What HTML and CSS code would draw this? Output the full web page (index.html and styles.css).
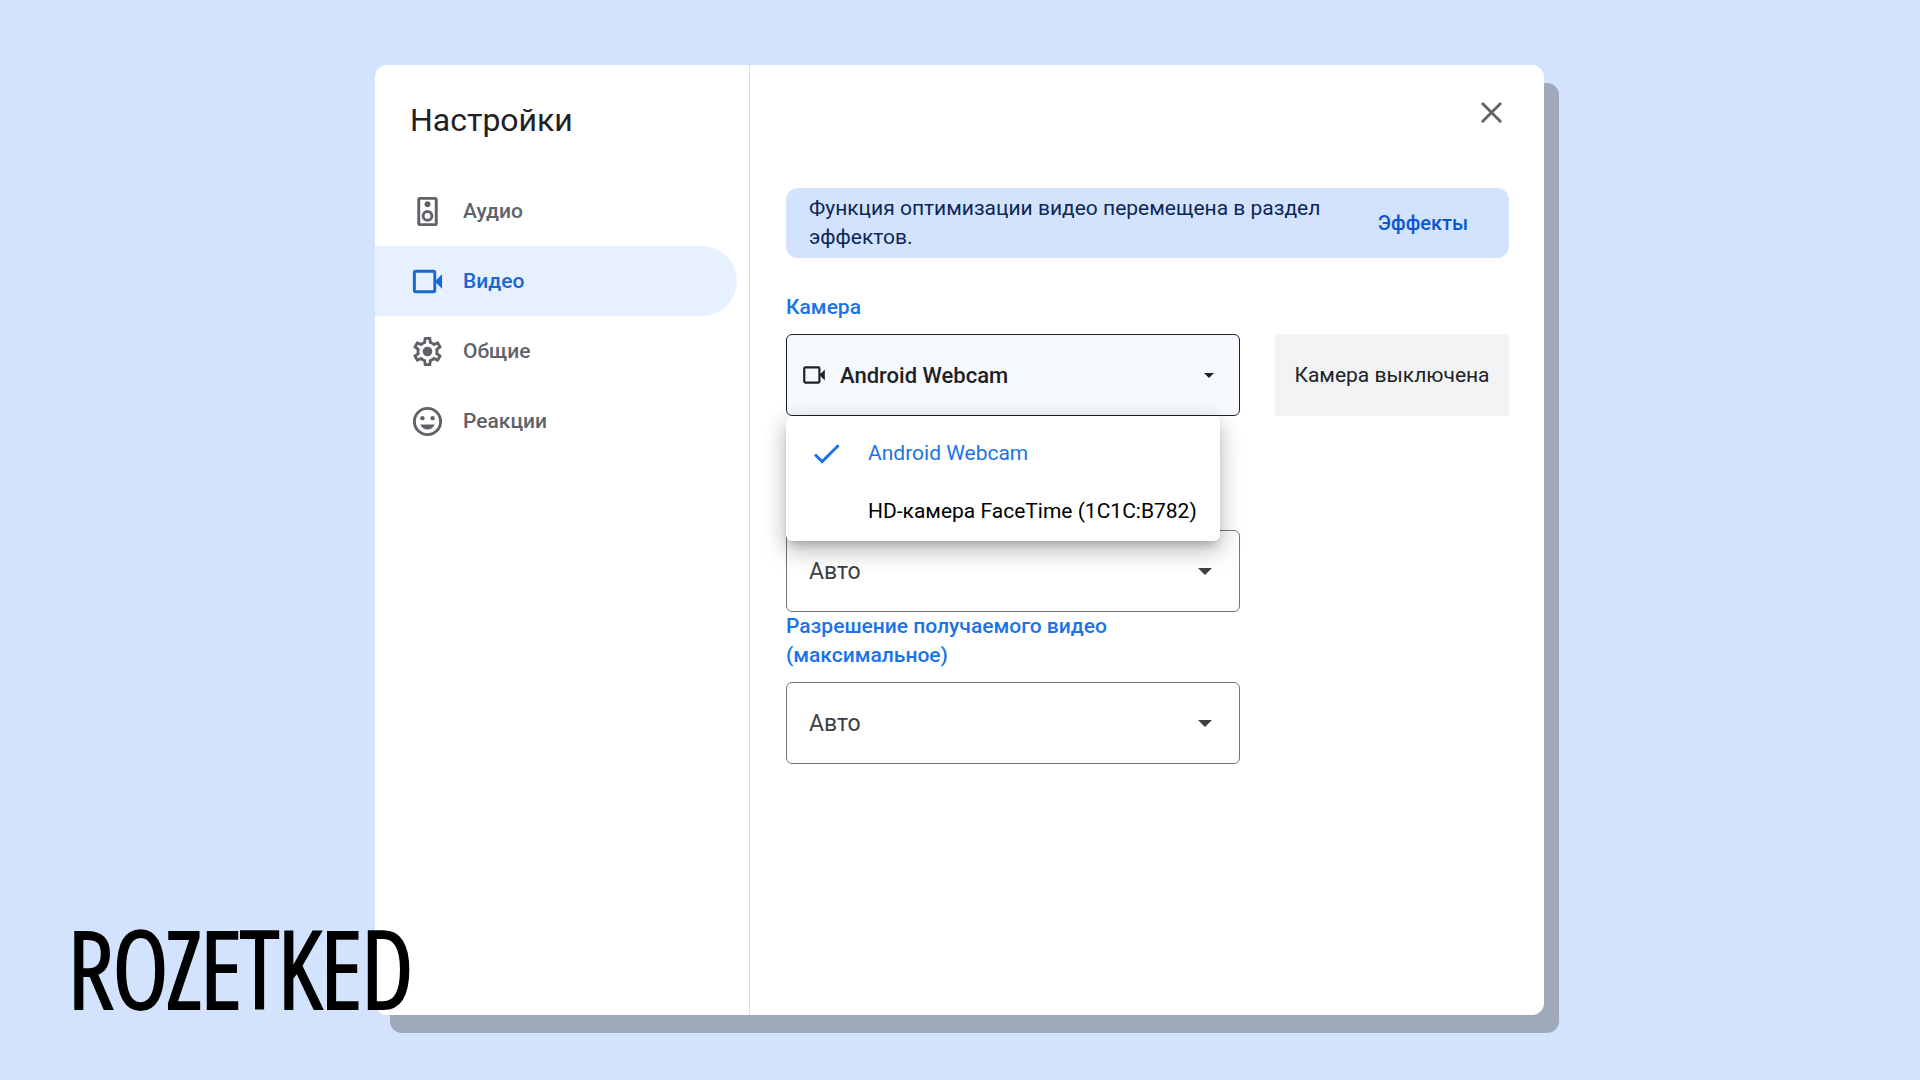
FILE: index.html
```html
<!DOCTYPE html>
<html lang="ru">
<head>
<meta charset="utf-8">
<title>Настройки</title>
<meta name="viewport" content="width=device-width, initial-scale=1">
<link rel="stylesheet" href="styles.css">
</head>
<body>
<main class="dialog" role="dialog" aria-labelledby="title">
  <aside class="sidebar">
    <h1 class="title" id="title">Настройки</h1>
    <nav class="tabs">
      <button class="tab" type="button">
        <svg class="icon" viewBox="0 0 24 24" aria-hidden="true"><rect x="6" y="3" width="12" height="18" rx="1" fill="none" stroke="currentColor" stroke-width="2"/><circle cx="12" cy="7" r="2"/><circle cx="12" cy="15" r="3" fill="none" stroke="currentColor" stroke-width="2"/></svg>
        Аудио
      </button>
      <button class="tab tab-active" type="button" aria-current="page">
        <svg class="icon" viewBox="0 0 24 24" aria-hidden="true"><rect x="3" y="5" width="14" height="14" rx="1" fill="none" stroke="currentColor" stroke-width="2"/><path d="M17 12l5-5v10z"/></svg>
        Видео
      </button>
      <button class="tab" type="button">
        <svg class="icon" viewBox="0 0 24 24" aria-hidden="true"><path d="M19.43 12.98c.04-.32.07-.64.07-.98 0-.34-.03-.66-.07-.98l2.11-1.65c.19-.15.24-.42.12-.64l-2-3.46c-.09-.16-.26-.25-.44-.25-.06 0-.12.01-.17.03l-2.49 1c-.52-.4-1.08-.73-1.69-.98l-.38-2.65C14.46 2.18 14.25 2 14 2h-4c-.25 0-.46.18-.49.42l-.38 2.65c-.61.25-1.17.59-1.69.98l-2.49-1c-.06-.02-.12-.03-.18-.03-.17 0-.34.09-.43.25l-2 3.46c-.13.22-.07.49.12.64l2.11 1.65c-.04.32-.07.65-.07.98 0 .33.03.66.07.98l-2.11 1.65c-.19.15-.24.42-.12.64l2 3.46c.09.16.26.25.44.25.06 0 .12-.01.17-.03l2.49-1c.52.4 1.08.73 1.69.98l.38 2.65c.03.24.24.42.49.42h4c.25 0 .46-.18.49-.42l.38-2.65c.61-.25 1.17-.59 1.69-.98l2.49 1c.06.02.12.03.18.03.17 0 .34-.09.43-.25l2-3.46c.12-.22.07-.49-.12-.64l-2.11-1.65zm-1.98-1.71c.04.31.05.52.05.73 0 .21-.02.43-.05.73l-.14 1.13.89.7 1.08.84-.7 1.21-1.27-.51-1.04-.42-.9.68c-.43.32-.84.56-1.25.73l-1.06.43-.16 1.13-.2 1.35h-1.4l-.19-1.35-.16-1.13-1.06-.43c-.43-.18-.83-.41-1.23-.71l-.91-.7-1.06.43-1.27.51-.7-1.21 1.08-.84.89-.7-.14-1.13c-.03-.31-.05-.54-.05-.74s.02-.43.05-.73l.14-1.13-.89-.7-1.08-.84.7-1.21 1.27.51 1.04.42.9-.68c.43-.32.84-.56 1.25-.73l1.06-.43.16-1.13.2-1.35h1.39l.19 1.35.16 1.13 1.06.43c.43.18.83.41 1.23.71l.91.7 1.06-.43 1.27-.51.7 1.21-1.07.85-.89.7.14 1.13z"/><circle cx="12" cy="12" r="3.3"/></svg>
        Общие
      </button>
      <button class="tab" type="button">
        <svg class="icon" viewBox="0 0 24 24" aria-hidden="true"><circle cx="12" cy="12" r="9" fill="none" stroke="currentColor" stroke-width="2"/><circle cx="8.5" cy="9.7" r="1.5"/><circle cx="15.5" cy="9.7" r="1.5"/><path d="M7 14h10c-.8 2.1-2.8 3.5-5 3.5S7.800 16.100 7 14z"/></svg>
        Реакции
      </button>
    </nav>
  </aside>
  <section class="content">
    <button class="close" type="button" aria-label="Закрыть">
      <svg class="icon" viewBox="0 0 24 24" aria-hidden="true"><path d="M6 6l12 12M18 6L6 18" fill="none" stroke="currentColor" stroke-width="2" stroke-linecap="round"/></svg>
    </button>
    <div class="banner">
      <p class="banner-text">Функция оптимизации видео перемещена в раздел эффектов.</p>
      <button class="banner-action" type="button">Эффекты</button>
    </div>
    <label class="label" for="camera">Камера</label>
    <div class="camera-row">
      <div class="field">
        <svg class="camera-icon" viewBox="0 0 24 24" aria-hidden="true"><rect x="3" y="5" width="14" height="14" rx="1" fill="none" stroke="currentColor" stroke-width="2"/><path d="M17 12l5-5v10z"/></svg>
        <select class="select select-camera" id="camera">
          <option>Android Webcam</option>
          <option>HD-камера FaceTime (1C1C:B782)</option>
        </select>
        <svg class="arrow arrow-small" viewBox="0 0 10 5" aria-hidden="true"><path d="M0 0h10L5 5z"/></svg>
        <div class="menu" role="listbox" aria-label="Камера">
          <button class="option option-selected" type="button" role="option" aria-selected="true">
            <svg class="icon" viewBox="0 0 24 24" aria-hidden="true"><path d="M9 16.170L4.830 12l-1.420 1.410L9 19 21 7l-1.410-1.410z"/></svg>
            Android Webcam
          </button>
          <button class="option" type="button" role="option" aria-selected="false">
            <span class="icon"></span>
            HD-камера FaceTime (1C1C:B782)
          </button>
        </div>
      </div>
      <div class="preview">Камера выключена</div>
    </div>
    <div class="resolutions">
      <div class="field">
        <select class="select" id="send" aria-label="Разрешение отправляемого видео"><option>Авто</option></select>
        <svg class="arrow" viewBox="0 0 14 7" aria-hidden="true"><path d="M0 0h14L7 7z"/></svg>
      </div>
      <label class="label" for="receive">Разрешение получаемого видео (максимальное)</label>
      <div class="field">
        <select class="select" id="receive"><option>Авто</option></select>
        <svg class="arrow" viewBox="0 0 14 7" aria-hidden="true"><path d="M0 0h14L7 7z"/></svg>
      </div>
    </div>
  </section>
</main>
<div class="brand">ROZETKED</div>
</body>
</html>
```
FILE: styles.css
```css
* {
  box-sizing: border-box;
}

body {
  margin: 0;
  min-height: 100vh;
  padding: 65px 33px 65px 32px;
  display: flex;
  justify-content: center;
  background: #d3e3fd;
  color: #202124;
  font: 400 21px/29px Roboto, "Liberation Sans", sans-serif;
}

button {
  margin: 0;
  padding: 0;
  border: 0;
  background: none;
  color: inherit;
  font: inherit;
  text-align: left;
  cursor: pointer;
}

svg {
  fill: currentColor;
}

.dialog {
  width: 100%;
  max-width: 1169px;
  display: grid;
  grid-template-columns: 375px 1fr;
  background: #fff;
  border-radius: 12px;
  box-shadow: 15px 18px 0 #9ea9bc;
}

.sidebar {
  border-right: 1px solid #dadce0;
}

.title {
  margin: 0;
  padding: 35px 35px 36px;
  font-size: 32px;
  line-height: 40px;
  font-weight: 400;
}

.tabs {
  display: flex;
  flex-direction: column;
  padding-right: 12px;
}

.tab {
  height: 70px;
  padding-left: 35px;
  display: flex;
  align-items: center;
  gap: 18px;
  border-radius: 0 35px 35px 0;
  color: #5f6368;
  font-weight: 500;
}

.tab-active {
  background: #e6f0fe;
  color: #1967d2;
}

.icon {
  width: 35px;
  height: 35px;
  flex: none;
  display: block;
}

.content {
  padding: 30px 35px 30px 36px;
}

.close {
  display: block;
  margin: 0 0 58px auto;
  color: #5f6368;
}

.banner {
  min-height: 70px;
  margin-bottom: 35px;
  padding: 6px 41px 6px 23px;
  display: flex;
  align-items: center;
  justify-content: space-between;
  gap: 24px;
  border-radius: 12px;
  background: #d3e3fd;
  color: #0d2757;
}

.banner-text {
  margin: 0;
  max-width: 530px;
}

.banner-action {
  color: #0b57d0;
  font-size: 20px;
  font-weight: 500;
}

.label {
  display: block;
  margin-bottom: 12px;
  color: #1a73e8;
  font-weight: 500;
}

.camera-row {
  display: grid;
  grid-template-columns: minmax(0, 454px) 1fr;
  gap: 35px;
}

.field {
  position: relative;
  display: grid;
  align-items: center;
}

.field > .select,
.field > .arrow,
.field > .camera-icon {
  grid-area: 1 / 1;
}

.select {
  width: 100%;
  height: 82px;
  padding: 0 22px;
  appearance: none;
  border: 1px solid #747775;
  border-radius: 6px;
  background: transparent;
  color: #3c4043;
  font: inherit;
  font-size: 23px;
}

.select-camera {
  padding-left: 53px;
  border-color: #202124;
  background: #f6f9fe;
  color: #202124;
  font-size: 22px;
  font-weight: 500;
}

.camera-icon {
  z-index: 1;
  width: 26px;
  height: 26px;
  margin-left: 15px;
  pointer-events: none;
}

.arrow {
  width: 14px;
  height: 7px;
  margin-right: 28px;
  justify-self: end;
  color: #3c4043;
  pointer-events: none;
}

.arrow-small {
  width: 10px;
  height: 5px;
  margin-right: 26px;
  color: #202124;
}

.menu {
  position: absolute;
  z-index: 2;
  top: 100%;
  left: 0;
  right: 20px;
  padding: 8px 0 1px;
  background: #fff;
  border-radius: 6px;
  box-shadow: 0 7px 8px -4px rgba(0, 0, 0, .2), 0 12px 24px 2px rgba(0, 0, 0, .14), 0 4px 20px 2px rgba(0, 0, 0, .12);
}

.option {
  width: 100%;
  height: 58px;
  padding-left: 23px;
  display: flex;
  align-items: center;
  gap: 24px;
  color: #000;
}

.option-selected {
  color: #1a73e8;
}

.preview {
  display: flex;
  align-items: center;
  justify-content: center;
  background: #f1f3f4;
}

.resolutions {
  max-width: 454px;
  margin-top: 114px;
}

.brand {
  position: absolute;
  z-index: 3;
  left: 68px;
  bottom: 58px;
  color: #000;
  font: 300 106px/110px "Open Sans Condensed Light", "Open Sans Condensed", "Liberation Sans Narrow", sans-serif;
  -webkit-text-stroke: 4px #000;
}
```
